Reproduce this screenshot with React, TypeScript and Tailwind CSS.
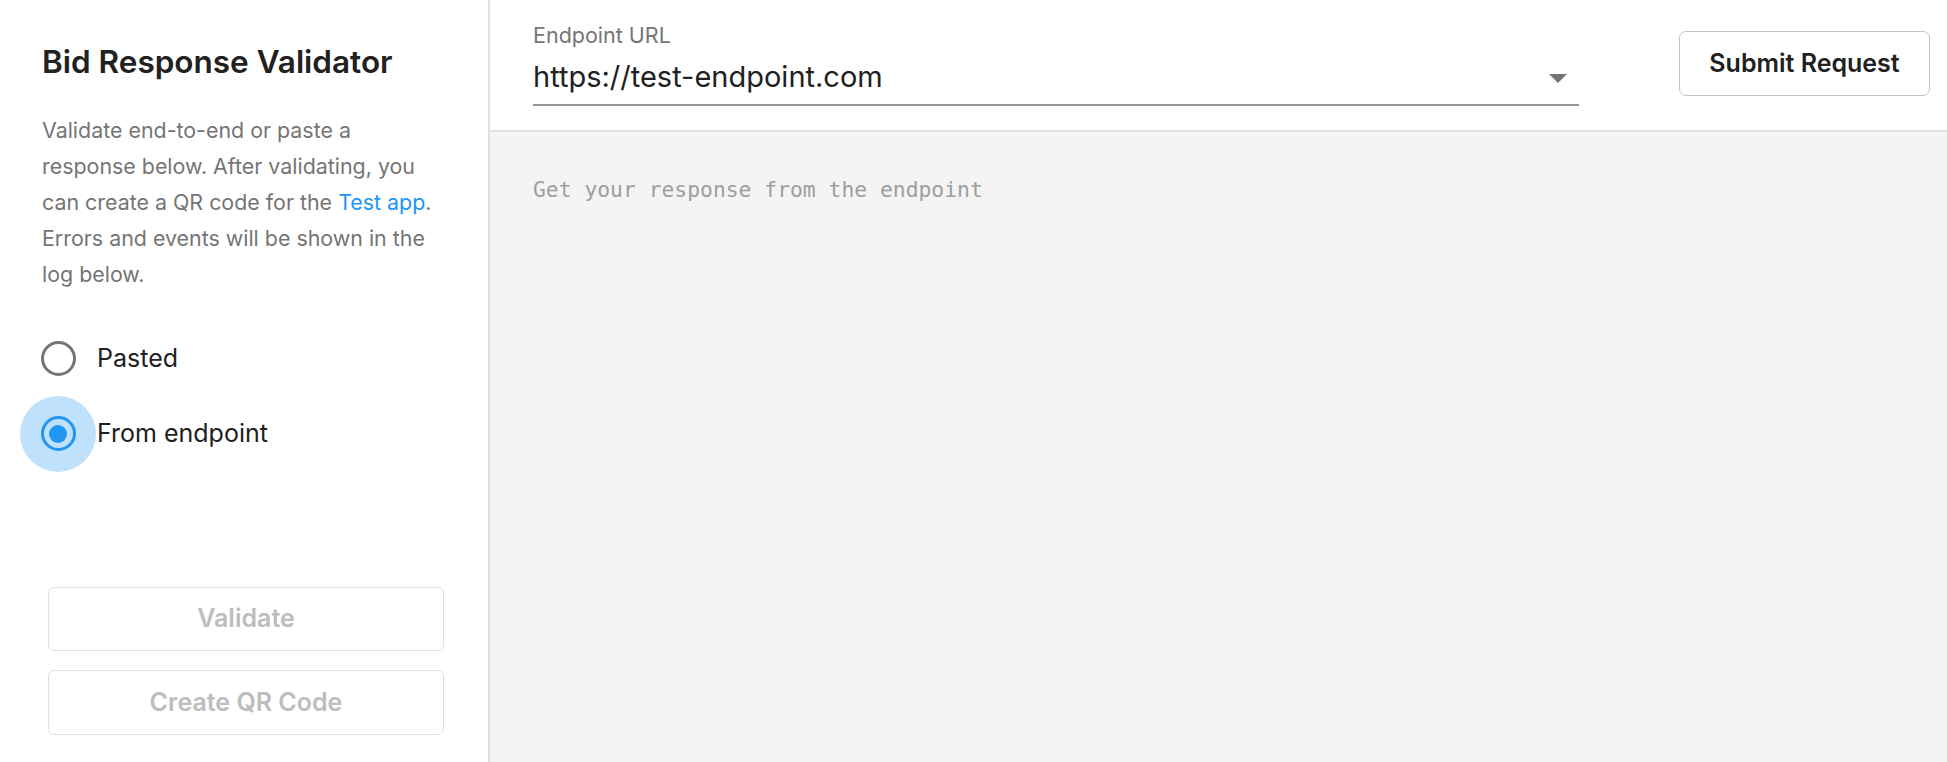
import React from "react";

export default function App() {
  return (
    <div className="flex h-[762px] w-full overflow-hidden font-['Inter',sans-serif]">
      <aside className="flex w-[490px] shrink-0 flex-col border-r-2 border-[#e0e0e0] bg-white pl-[42px] pr-[42px]">
        <h1 className="mt-[44px] whitespace-nowrap text-[31.5px] font-semibold leading-[36px] text-[#212121]">
          Bid Response Validator
        </h1>
        <p className="mt-[32px] text-[21.4px] leading-[36px] text-[#757575]">
          Validate end-to-end or paste a response below. After validating, you can create a QR code for the{" "}
          <a className="text-[#2196f3]">Test app</a>. Errors and events will be shown in the log below.
        </p>
        <div className="mt-[29px] flex flex-col">
          <label className="-ml-[22px] flex h-[75px] items-center">
            <span className="flex h-[76px] w-[76px] items-center justify-center rounded-full">
              <span className="h-[35px] w-[35px] rounded-full border-[3px] border-[#757575]" />
            </span>
            <span className="ml-[1px] text-[25px] text-[#212121]">Pasted</span>
          </label>
          <label className="-ml-[22px] flex h-[75px] items-center">
            <span className="flex h-[76px] w-[76px] items-center justify-center rounded-full bg-[#bfe1fb]">
              <span className="flex h-[35px] w-[35px] items-center justify-center rounded-full border-[3px] border-[#2196f3]">
                <span className="h-[18px] w-[18px] rounded-full bg-[#2196f3]" />
              </span>
            </span>
            <span className="ml-[1px] text-[25px] text-[#212121]">From endpoint</span>
          </label>
        </div>
        <div className="mb-[27px] mt-auto flex flex-col gap-[19px] pl-[6px] pr-[2px]">
          <button className="h-[64px] rounded-[6px] border border-[#e0e0e0] text-[25px] font-semibold text-[#bdbdbd]">
            Validate
          </button>
          <button className="h-[65px] rounded-[6px] border border-[#e0e0e0] text-[25px] font-semibold text-[#bdbdbd]">
            Create QR Code
          </button>
        </div>
      </aside>
      <main className="flex flex-1 flex-col bg-[#f4f4f4]">
        <header className="flex h-[132px] shrink-0 items-start border-b-2 border-[#e0e0e0] bg-white pl-[43px] pr-[17px]">
          <div className="flex w-[1046px] flex-col">
            <span className="mt-[21px] text-[21.5px] leading-[28px] text-[#757575]">Endpoint URL</span>
            <div className="flex h-[57px] items-center border-b-2 border-[#949494]">
              <span className="flex-1 text-[29px] leading-[36px] text-[#212121]">https://test-endpoint.com</span>
              <svg width="18" height="9" viewBox="0 0 18 9" className="mr-[12px] mt-[4px]">
                <path d="M0 0 L18 0 L9 9 Z" fill="#757575" />
              </svg>
            </div>
          </div>
          <div className="flex-1" />
          <button className="mt-[31px] h-[65px] w-[251px] rounded-[7px] border border-[#c4c4c4] bg-white text-[25px] font-semibold text-[#212121]">
            Submit Request
          </button>
        </header>
        <div className="pl-[43px] pt-[44px] font-['DejaVu_Sans_Mono',monospace] text-[21.35px] leading-[28px] text-[#9e9e9e]">
          Get your response from the endpoint
        </div>
      </main>
    </div>
  );
}
